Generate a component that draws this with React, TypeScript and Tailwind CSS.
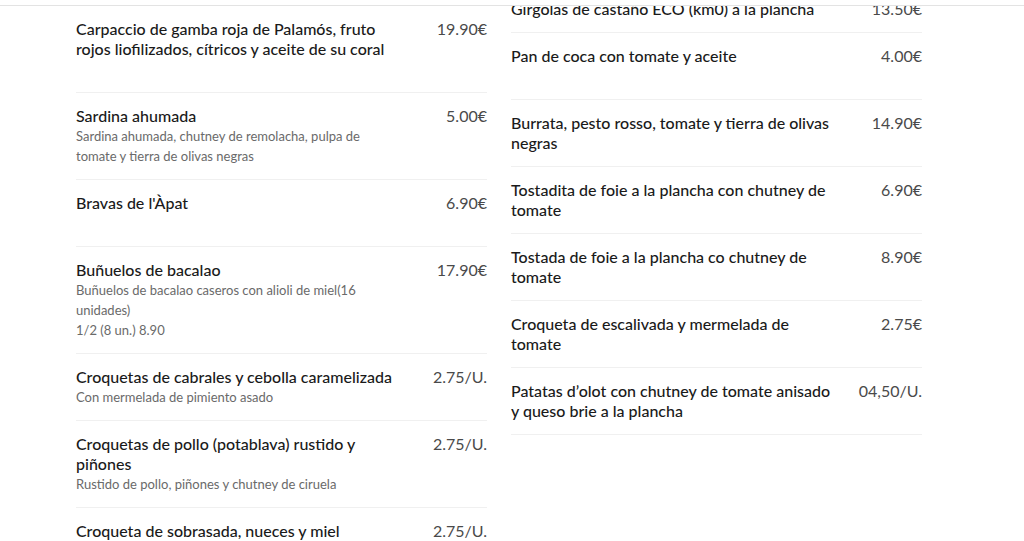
import React from "react";

type Item = {
  title: string;
  price: string;
  desc?: string[];
  blank?: boolean;
};

const left: Item[] = [
  {
    title: "Carpaccio de gamba roja de Palamós, fruto rojos liofilizados, cítricos y aceite de su coral",
    price: "19.90€",
    blank: true,
  },
  {
    title: "Sardina ahumada",
    price: "5.00€",
    desc: ["Sardina ahumada, chutney de remolacha, pulpa de tomate y tierra de olivas negras"],
  },
  { title: "Bravas de l'Àpat", price: "6.90€", blank: true },
  {
    title: "Buñuelos de bacalao",
    price: "17.90€",
    desc: ["Buñuelos de bacalao caseros con alioli de miel(16 unidades)", "1/2 (8 un.) 8.90"],
  },
  {
    title: "Croquetas de cabrales y cebolla caramelizada",
    price: "2.75/U.",
    desc: ["Con mermelada de pimiento asado"],
  },
  {
    title: "Croquetas de pollo (potablava) rustido y piñones",
    price: "2.75/U.",
    desc: ["Rustido de pollo, piñones y chutney de ciruela"],
  },
  { title: "Croqueta de sobrasada, nueces y miel", price: "2.75/U.", blank: true },
];

const right: Item[] = [
  { title: "Girgolas de castaño ECO (km0) a la plancha", price: "13.50€" },
  { title: "Pan de coca con tomate y aceite", price: "4.00€", blank: true },
  { title: "Burrata, pesto rosso, tomate y tierra de olivas negras", price: "14.90€" },
  { title: "Tostadita de foie a la plancha con chutney de tomate", price: "6.90€" },
  { title: "Tostada de foie a la plancha co chutney de tomate", price: "8.90€" },
  { title: "Croqueta de escalivada y mermelada de tomate", price: "2.75€" },
  {
    title: "Patatas d’olot con chutney de tomate anisado y queso brie a la plancha",
    price: "04,50/U.",
  },
];

function Row({ item }: { item: Item }) {
  return (
    <div className="flex border-b border-[#f0f0f0] py-[13px]">
      <div className="w-[325px] shrink-0">
        <h3 className="text-[16px] leading-[20px] font-medium text-[#1a1a1a]">{item.title}</h3>
        {item.desc &&
          item.desc.map((d, i) => (
            <p key={i} className="text-[13px] leading-[20px] text-[#6a6a6a]">
              {d}
            </p>
          ))}
        {item.blank && <div className="h-[20px]" />}
      </div>
      <div className="flex-1 text-right text-[16px] leading-[20px] text-[#4a4a4a] whitespace-nowrap">
        {item.price}
      </div>
    </div>
  );
}

export default function App() {
  return (
    <div
      className="relative h-[541px] w-[1024px] overflow-hidden bg-white"
      style={{ fontFamily: "Lato, 'Noto Sans', sans-serif" }}
    >
      <div className="absolute left-0 right-0 top-0 z-10 h-[6px] border-b border-[#e3e3e3] bg-white" />
      <div className="ml-[76px] flex items-start gap-[24px] pt-[6px]">
        <div className="flex w-[411px] flex-col">
          {left.map((it, i) => (
            <Row key={i} item={it} />
          ))}
        </div>
        <div className="-mt-[20px] flex w-[411px] flex-col">
          {right.map((it, i) => (
            <Row key={i} item={it} />
          ))}
        </div>
      </div>
    </div>
  );
}
